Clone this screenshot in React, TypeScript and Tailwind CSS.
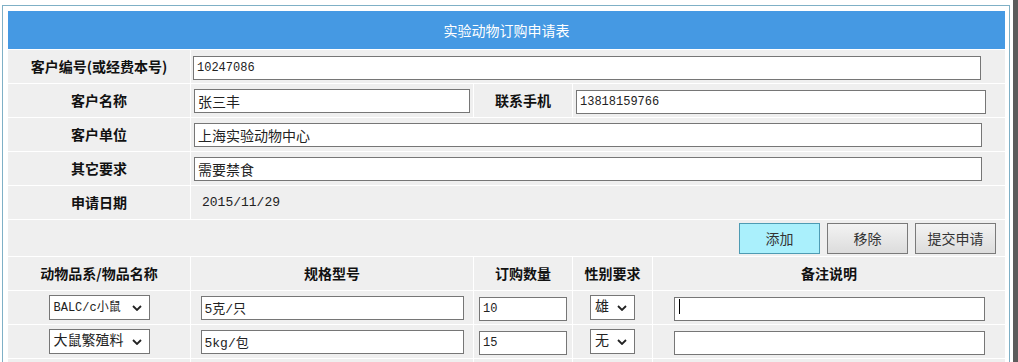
import React from 'react';

const cjk = '[font-family:"Noto_Sans_CJK_SC",sans-serif]';
const mono = '[font-family:"Liberation_Mono","Noto_Sans_CJK_SC",monospace]';
const box = 'h-[24px] border border-[#767676] bg-white px-[3px] text-[#222] outline-none';

function Chevron() {
  return (
    <svg width="10" height="6" viewBox="0 0 10 6" className="shrink-0">
      <path d="M1 1 L5 5 L9 1" fill="none" stroke="#222" strokeWidth="1.8" />
    </svg>
  );
}

function FakeSelect({ label, width, small }: { label: string; width: string; small?: boolean }) {
  return (
    <div className={`mx-auto flex ${width} h-[25px] items-center justify-between border border-[#767676] bg-white pl-[4px] pr-[7px] ${mono} ${small ? 'text-[12px]' : 'text-[14px]'} text-[#222]`}>
      <span className="whitespace-nowrap">{label}</span>
      <Chevron />
    </div>
  );
}

export default function App() {
  const td = 'border border-white p-0';
  const label = `${td} text-center text-[14px] font-bold text-[#111] ${cjk}`;

  return (
    <div className="flex h-[362px] w-[1018px] overflow-hidden bg-white">
      <div className="ml-[2px] mt-[5px] h-[400px] w-[1008px] border border-b-0 border-[#7fb0c6] p-[4px]">
        <table className="w-[998px] table-fixed border-collapse bg-[#efefef]">
          <colgroup>
            <col className="w-[183px]" />
            <col className="w-[283px]" />
            <col className="w-[99px]" />
            <col className="w-[80px]" />
            <col className="w-[353px]" />
          </colgroup>
          <tbody>
            <tr className="h-[39px]">
              <td colSpan={5} className={`${td} bg-[#4599e3] text-center text-[14px] text-white ${cjk}`}>
                实验动物订购申请表
              </td>
            </tr>
            <tr className="h-[34px]">
              <td className={label}>客户编号(或经费本号)</td>
              <td colSpan={4} className={`${td} pl-[2px]`}>
                <input readOnly value="10247086" className={`${box} w-[788px] text-[12px] ${mono}`} />
              </td>
            </tr>
            <tr className="h-[34px]">
              <td className={label}>客户名称</td>
              <td className={`${td} pl-[3px]`}>
                <input readOnly value="张三丰" className={`${box} w-[276px] text-[14px] ${mono}`} />
              </td>
              <td className={label}>联系手机</td>
              <td colSpan={2} className={`${td} pl-[3px]`}>
                <input readOnly value="13818159766" className={`${box} w-[410px] text-[12px] ${mono}`} />
              </td>
            </tr>
            <tr className="h-[34px]">
              <td className={label}>客户单位</td>
              <td colSpan={4} className={`${td} pl-[3px]`}>
                <input readOnly value="上海实验动物中心" className={`${box} w-[788px] text-[14px] ${mono}`} />
              </td>
            </tr>
            <tr className="h-[34px]">
              <td className={label}>其它要求</td>
              <td colSpan={4} className={`${td} pl-[3px]`}>
                <input readOnly value="需要禁食" className={`${box} w-[788px] text-[14px] ${mono}`} />
              </td>
            </tr>
            <tr className="h-[34px]">
              <td className={label}>申请日期</td>
              <td colSpan={4} className={`${td} pl-[11px] text-[13px] text-[#222] ${mono}`}>2015/11/29</td>
            </tr>
            <tr className="h-[37px]">
              <td colSpan={5} className={td}>
                <div className={`flex justify-end gap-[7px] pr-[9px] text-[14px] text-[#333] ${cjk}`}>
                  <button className="h-[31px] w-[81px] border border-[#4e9bb3] bg-[#aaf0fc]">添加</button>
                  <button className="h-[31px] w-[81px] border border-[#7a7a7a] bg-gradient-to-b from-[#f3f3f3] to-[#dcdcdc]">移除</button>
                  <button className="h-[31px] w-[81px] border border-[#7a7a7a] bg-gradient-to-b from-[#f3f3f3] to-[#dcdcdc]">提交申请</button>
                </div>
              </td>
            </tr>
            <tr className="h-[34px]">
              <td className={label}>动物品系/物品名称</td>
              <td className={label}>规格型号</td>
              <td className={label}>订购数量</td>
              <td className={label}>性别要求</td>
              <td className={label}>备注说明</td>
            </tr>
            <tr className="h-[34px]">
              <td className={td}><FakeSelect label="BALC/c小鼠" width="w-[101px]" small /></td>
              <td className={`${td} text-center`}>
                <input readOnly value="5克/只" className={`${box} w-[263px] text-[13px] ${mono}`} />
              </td>
              <td className={`${td} text-center`}>
                <input readOnly value="10" className={`${box} w-[88px] text-[12px] ${mono}`} />
              </td>
              <td className={td}><FakeSelect label="雄" width="w-[45px]" /></td>
              <td className={`${td} text-center`}>
                <div className="relative mx-auto w-[311px]">
                  <input readOnly value="" className={`${box} w-[311px] border-[#1e1e1e] text-[13px] ${mono}`} />
                  <span className="absolute left-[5px] top-[5px] h-[15px] w-px bg-black" />
                </div>
              </td>
            </tr>
            <tr className="h-[34px]">
              <td className={td}><FakeSelect label="大鼠繁殖料" width="w-[101px]" /></td>
              <td className={`${td} text-center`}>
                <input readOnly value="5kg/包" className={`${box} w-[263px] text-[13px] ${mono}`} />
              </td>
              <td className={`${td} text-center`}>
                <input readOnly value="15" className={`${box} w-[88px] text-[12px] ${mono}`} />
              </td>
              <td className={td}><FakeSelect label="无" width="w-[45px]" /></td>
              <td className={`${td} text-center`}>
                <input readOnly value="" className={`${box} w-[311px] text-[13px] ${mono}`} />
              </td>
            </tr>
            <tr className="h-[34px]">
              <td className={td} />
              <td className={td} />
              <td className={td} />
              <td className={td} />
              <td className={td} />
            </tr>
          </tbody>
        </table>
      </div>
      <div className="flex-1" />
      <div className="w-[5px] bg-[#5c5c5c]" />
    </div>
  );
}
